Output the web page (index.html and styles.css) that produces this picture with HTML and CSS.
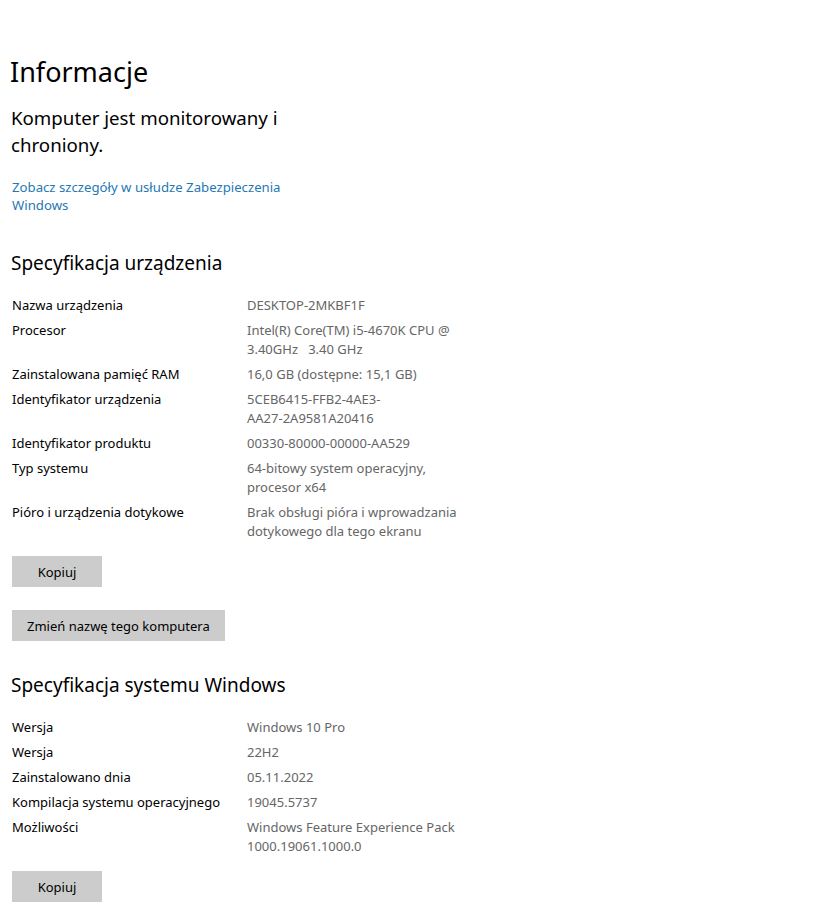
FILE: index.html
```html
<!DOCTYPE html>
<html lang="pl">
<head>
<meta charset="utf-8">
<link rel="stylesheet" href="styles.css">
</head>
<body>
<main class="page">
  <h1 class="title">Informacje</h1>
  <p class="status">Komputer jest monitorowany i chroniony.</p>
  <a class="link" href="#">Zobacz szczegóły w usłudze Zabezpieczenia Windows</a>

  <h2 class="section">Specyfikacja urządzenia</h2>
  <dl class="specs">
    <div class="row"><dt>Nazwa urządzenia</dt><dd>DESKTOP-2MKBF1F</dd></div>
    <div class="row"><dt>Procesor</dt><dd>Intel(R) Core(TM) i5-4670K CPU @ 3.40GHz&nbsp;&nbsp;&nbsp;3.40 GHz</dd></div>
    <div class="row"><dt>Zainstalowana pamięć RAM</dt><dd>16,0 GB (dostępne: 15,1 GB)</dd></div>
    <div class="row"><dt>Identyfikator urządzenia</dt><dd>5CEB6415-FFB2-4AE3-<br>AA27-2A9581A20416</dd></div>
    <div class="row"><dt>Identyfikator produktu</dt><dd>00330-80000-00000-AA529</dd></div>
    <div class="row"><dt>Typ systemu</dt><dd>64-bitowy system operacyjny, procesor x64</dd></div>
    <div class="row"><dt>Pióro i urządzenia dotykowe</dt><dd>Brak obsługi pióra i wprowadzania dotykowego dla tego ekranu</dd></div>
  </dl>
  <button class="btn btn-copy">Kopiuj</button>
  <button class="btn btn-rename">Zmień nazwę tego komputera</button>

  <h2 class="section section-win">Specyfikacja systemu Windows</h2>
  <dl class="specs specs-win">
    <div class="row"><dt>Wersja</dt><dd>Windows 10 Pro</dd></div>
    <div class="row"><dt>Wersja</dt><dd>22H2</dd></div>
    <div class="row"><dt>Zainstalowano dnia</dt><dd>05.11.2022</dd></div>
    <div class="row"><dt>Kompilacja systemu operacyjnego</dt><dd>19045.5737</dd></div>
    <div class="row"><dt>Możliwości</dt><dd>Windows Feature Experience Pack 1000.19061.1000.0</dd></div>
  </dl>
  <button class="btn btn-copy">Kopiuj</button>
</main>
</body>
</html>
```

FILE: styles.css
```css
* { box-sizing: border-box; }
html, body { margin: 0; padding: 0; background: #fff; }
body {
  font-family: "Noto Sans", "Open Sans", sans-serif;
  color: #000;
  width: 822px;
  height: 917px;
  overflow: hidden;
}
.page {
  padding: 52px 0 0 10px;
  display: flex;
  flex-direction: column;
  align-items: flex-start;
}
.title {
  margin: 0;
  font-size: 27px;
  font-weight: 400;
  line-height: 40px;
}
.status {
  margin: 12px 0 0 1px;
  width: 290px;
  font-size: 18.7px;
  line-height: 27px;
}
.link {
  margin: 20px 0 0 2px;
  width: 290px;
  font-size: 13.2px;
  line-height: 18px;
  color: #1f78b4;
  text-decoration: none;
}
.section {
  margin: 35px 0 0 1px;
  font-size: 19px;
  font-weight: 400;
  line-height: 28px;
}
.section-win { margin-top: 30px; }
.specs {
  margin: 19px 0 0 2px;
  display: flex;
  flex-direction: column;
  gap: 6px;
}
.specs-win { margin-top: 19px; }
.row {
  display: grid;
  grid-template-columns: 235px 225px;
  font-size: 13px;
  line-height: 19px;
}
.row dt { color: #000; }
.row dd { margin: 0; color: #666666; }
.btn {
  margin: 15px 0 0 2px;
  height: 31px;
  padding: 0 15px;
  border: 0;
  background: #cccccc;
  font-family: inherit;
  font-size: 13px;
  color: #000;
}
.btn-copy { width: 90px; }
.btn-rename { margin-top: 23px; }
```
